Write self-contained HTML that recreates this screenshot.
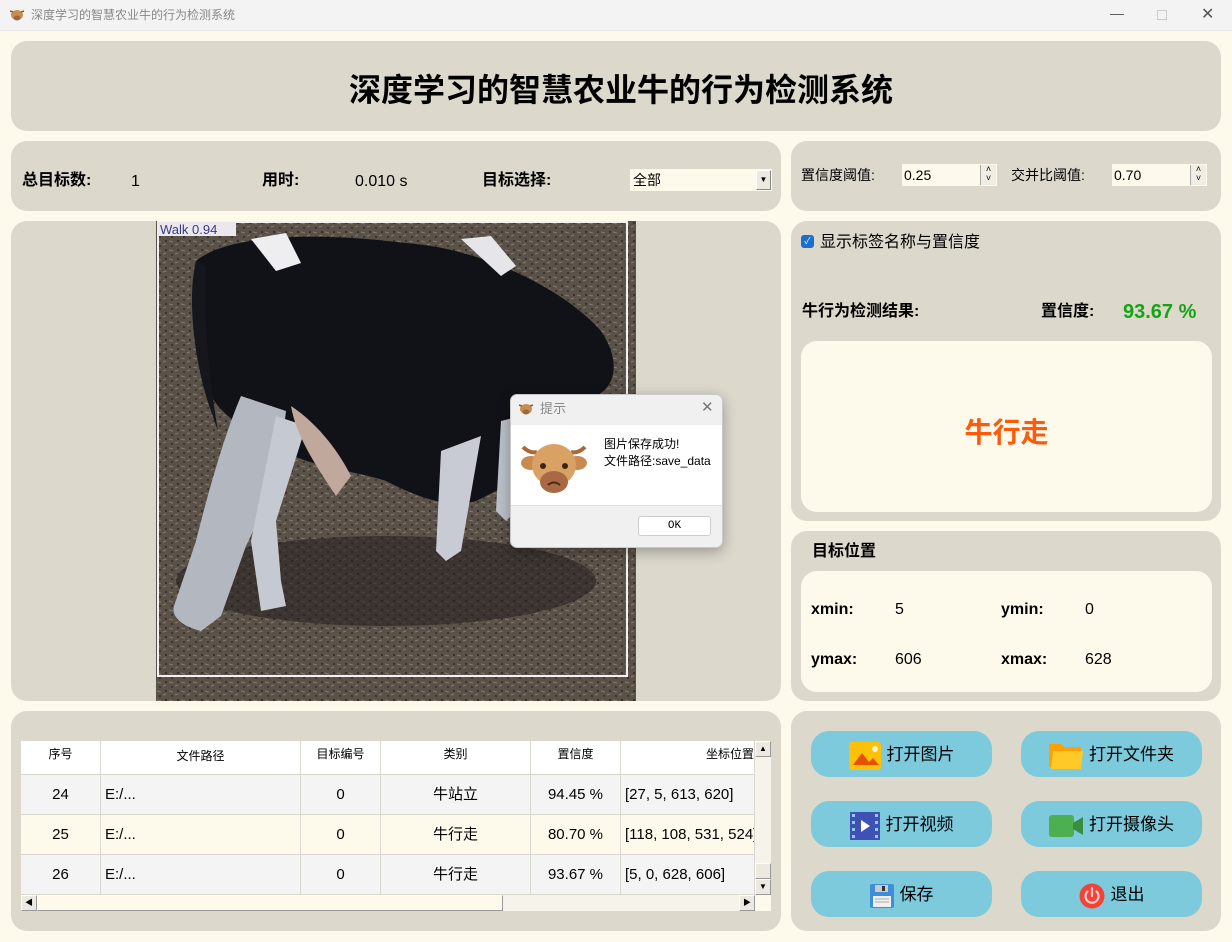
<!DOCTYPE html>
<html><head><meta charset="utf-8"><style>
*{margin:0;padding:0;box-sizing:border-box}
body{width:1232px;height:942px;background:#fefaeb;font-family:"Liberation Sans","Noto Sans CJK SC",sans-serif;position:relative;overflow:hidden;color:#000;line-height:1.2}
.a{position:absolute}
.p{position:absolute;background:#dcd8cc;border-radius:16px}
.b{font-weight:bold}
.btn{position:absolute;width:181px;height:46px;padding-top:3px;background:#7ccadc;border-radius:18px;font-size:17px;display:flex;align-items:center;justify-content:center;gap:6px}
.c{position:absolute;height:40px;line-height:40px;font-size:15px;text-align:center;border-right:1px solid #d8d8d0;border-bottom:1px solid #d8d8d0;white-space:nowrap;overflow:hidden}
.h{position:absolute;top:0;height:32px;line-height:26px;font-size:12px;text-align:center;border-right:1px solid #d8d8d0;background:#fff}
.l{text-align:left;padding-left:4px}
.sb{position:absolute;width:16px;height:16px;background:#ece9e0;border:1px solid #999;border-top-color:#fff;border-left-color:#fff;font-size:8px;text-align:center;line-height:14px}
</style></head><body>
<div class="a" style="left:0;top:0;width:1232px;height:31px;background:#f3f3f3;border-bottom:1px solid #e6e6e6"></div>
<svg class="a" style="left:9px;top:8px" width="16" height="14" viewBox="0 0 16 14"><ellipse cx="8" cy="7" rx="6" ry="5" fill="#c98d52"/><ellipse cx="8" cy="10" rx="3.5" ry="2.5" fill="#9b6840"/><path d="M1 3l3 1M15 3l-3 1" stroke="#8a5a30" stroke-width="1.5"/></svg>
<div class="a" style="left:31px;top:8px;font-size:12px;color:#888">深度学习的智慧农业牛的行为检测系统</div>
<div class="a" style="left:1110px;top:5px;font-size:14px;color:#555">—</div>
<div class="a" style="left:1157px;top:10px;width:10px;height:10px;border:1px solid #ccc"></div>
<div class="a" style="left:1201px;top:5px;font-size:16px;color:#555">✕</div>

<div class="p" style="left:11px;top:41px;width:1210px;height:90px"></div>
<div class="a b" style="left:0;width:1242px;top:71px;text-align:center;font-size:32px">深度学习的智慧农业牛的行为检测系统</div>

<div class="p" style="left:11px;top:141px;width:770px;height:70px"></div>
<div class="a b" style="left:22px;top:171px;font-size:16px">总目标数:</div>
<div class="a" style="left:131px;top:172px;font-size:16px">1</div>
<div class="a b" style="left:262px;top:171px;font-size:16px">用时:</div>
<div class="a" style="left:355px;top:172px;font-size:16px">0.010 s</div>
<div class="a b" style="left:482px;top:171px;font-size:16px">目标选择:</div>
<div class="a" style="left:630px;top:169px;width:142px;height:22px;background:#fefaeb;font-size:14px;padding:3px 3px">全部</div>
<div class="a" style="left:756px;top:170px;width:15px;height:20px;background:#ece9e0;border:1px solid #888;border-top-color:#fff;border-left-color:#fff;font-size:8px;text-align:center;line-height:18px">▼</div>

<div class="p" style="left:791px;top:141px;width:430px;height:70px"></div>
<div class="a" style="left:801px;top:167px;font-size:14px">置信度阈值:</div>
<div class="a" style="left:902px;top:164px;width:95px;height:22px;background:#fefaeb;font-size:14px;padding:3px 2px">0.25</div>
<div class="a" style="left:980px;top:165px;width:16px;height:20px;border-left:1px solid #aaa;font-size:9px;text-align:center;line-height:9px;background:#f0ede4">˄<br>˅</div>
<div class="a" style="left:1011px;top:167px;font-size:14px">交并比阈值:</div>
<div class="a" style="left:1112px;top:164px;width:95px;height:22px;background:#fefaeb;font-size:14px;padding:3px 2px">0.70</div>
<div class="a" style="left:1190px;top:165px;width:16px;height:20px;border-left:1px solid #aaa;font-size:9px;text-align:center;line-height:9px;background:#f0ede4">˄<br>˅</div>

<div class="p" style="left:11px;top:221px;width:770px;height:480px"></div>
<svg class="a" style="left:156px;top:221px" width="480" height="480" viewBox="0 0 480 480">
<defs><pattern id="g" width="12" height="9" patternUnits="userSpaceOnUse"><rect width="12" height="9" fill="#5a5149"/><path d="M1 2l4 1M7 6l3-1" stroke="#857b6c" stroke-width="1"/><rect x="9" y="1" width="2" height="2" fill="#3a332d"/><rect x="3" y="6" width="2" height="2" fill="#3d362e"/></pattern></defs>
<rect width="480" height="480" fill="url(#g)"/>
<ellipse cx="230" cy="360" rx="210" ry="45" fill="#26221f" opacity=".6"/>
<path d="M40 40 C70 15 150 10 250 22 C330 28 410 70 445 110 C465 140 460 165 440 175 C420 180 405 190 395 200 L370 250 L340 270 L320 280 C290 290 250 270 230 260 C200 250 150 245 130 230 C100 215 70 200 55 175 C45 130 38 80 40 40Z" fill="#111218"/>
<path d="M40 40 C30 80 40 150 55 190 L62 210 C50 140 48 80 50 45Z" fill="#16171c"/>
<path d="M85 175 L130 190 C125 235 110 285 90 325 L65 395 L45 410 C25 405 15 395 18 385 L40 320 C55 260 70 210 85 175Z" fill="#b3b7c0"/>
<path d="M120 195 L150 205 L120 300 L125 360 L130 385 L105 390 L95 320Z" fill="#c5c9d1"/>
<path d="M285 230 L325 215 L305 330 L290 340 L280 330 Z" fill="#c8cbd3"/>
<path d="M345 200 L365 195 L360 290 L350 300 L340 290 Z" fill="#bcc0c8"/>
<path d="M135 185 C165 205 185 235 195 255 L180 275 C160 245 140 215 135 185Z" fill="#c0a89c"/>
<path d="M95 18 L130 12 L145 42 L120 50Z" fill="#eeeef0"/>
<path d="M305 18 L335 15 L360 45 L345 55Z" fill="#e6e6ea"/>
<rect x="2" y="1" width="469" height="454" fill="none" stroke="#f2f2f2" stroke-width="2"/>
<rect x="2" y="1" width="78" height="14" fill="#eae8ee"/>
<text x="4" y="13" font-family="Liberation Sans" font-size="13" fill="#3a3a80">Walk  0.94</text>
</svg>

<div class="p" style="left:791px;top:221px;width:430px;height:300px"></div>
<div class="a" style="left:801px;top:235px;width:13px;height:13px;background:#1a6fc9;border-radius:3px;color:#fff;font-size:9px;text-align:center;line-height:13px">✓</div>
<div class="a" style="left:820px;top:233px;font-size:16px">显示标签名称与置信度</div>
<div class="a b" style="left:802px;top:302px;font-size:16px">牛行为检测结果:</div>
<div class="a b" style="left:1041px;top:302px;font-size:16px">置信度:</div>
<div class="a b" style="left:1123px;top:300px;font-size:20px;color:#14a514">93.67 %</div>
<div class="a" style="left:801px;top:341px;width:411px;height:171px;background:#fefaeb;border-radius:16px"></div>
<div class="a b" style="left:801px;width:411px;top:416px;text-align:center;font-size:28px;color:#ff5a0a">牛行走</div>

<div class="p" style="left:791px;top:531px;width:430px;height:170px"></div>
<div class="a b" style="left:812px;top:542px;font-size:16px">目标位置</div>
<div class="a" style="left:801px;top:571px;width:411px;height:121px;background:#fefaeb;border-radius:16px"></div>
<div class="a b" style="left:811px;top:600px;font-size:16px">xmin:</div>
<div class="a" style="left:895px;top:600px;font-size:16px">5</div>
<div class="a b" style="left:1001px;top:600px;font-size:16px">ymin:</div>
<div class="a" style="left:1085px;top:600px;font-size:16px">0</div>
<div class="a b" style="left:811px;top:650px;font-size:16px">ymax:</div>
<div class="a" style="left:895px;top:650px;font-size:16px">606</div>
<div class="a b" style="left:1001px;top:650px;font-size:16px">xmax:</div>
<div class="a" style="left:1085px;top:650px;font-size:16px">628</div>

<div class="p" style="left:11px;top:711px;width:770px;height:220px"></div>
<div class="a" style="left:21px;top:741px;width:750px;height:170px;background:#fefaeb;overflow:hidden">
<div class="h" style="left:0;width:80px">序号</div>
<div class="h" style="left:80px;width:200px;line-height:30px">文件路径</div>
<div class="h" style="left:280px;width:80px">目标编号</div>
<div class="h" style="left:360px;width:150px">类别</div>
<div class="h" style="left:510px;width:90px">置信度</div>
<div class="h" style="left:600px;width:134px;text-align:right">坐标位置</div>
<div class="a" style="left:0;top:33px;width:734px;height:1px;background:#d8d8d0"></div>
<div class="a" style="left:79px;top:32px;width:1px;height:2px;background:#d8d8d0"></div>
<div class="a" style="left:279px;top:32px;width:1px;height:2px;background:#d8d8d0"></div>
<div class="a" style="left:359px;top:32px;width:1px;height:2px;background:#d8d8d0"></div>
<div class="a" style="left:509px;top:32px;width:1px;height:2px;background:#d8d8d0"></div>
<div class="a" style="left:599px;top:32px;width:1px;height:2px;background:#d8d8d0"></div>

<div class="c" style="left:0;top:34px;width:80px;background:#f4f4f4">24</div>
<div class="c l" style="left:80px;top:34px;width:200px;background:#f4f4f4">E:/...</div>
<div class="c" style="left:280px;top:34px;width:80px;background:#f4f4f4">0</div>
<div class="c" style="left:360px;top:34px;width:150px;background:#f4f4f4">牛站立</div>
<div class="c" style="left:510px;top:34px;width:90px;background:#f4f4f4">94.45 %</div>
<div class="c l" style="left:600px;top:34px;width:134px;background:#f4f4f4">[27, 5, 613, 620]</div>

<div class="c" style="left:0;top:74px;width:80px">25</div>
<div class="c l" style="left:80px;top:74px;width:200px">E:/...</div>
<div class="c" style="left:280px;top:74px;width:80px">0</div>
<div class="c" style="left:360px;top:74px;width:150px">牛行走</div>
<div class="c" style="left:510px;top:74px;width:90px">80.70 %</div>
<div class="c l" style="left:600px;top:74px;width:134px">[118, 108, 531, 524]</div>

<div class="c" style="left:0;top:114px;width:80px;background:#f4f4f4">26</div>
<div class="c l" style="left:80px;top:114px;width:200px;background:#f4f4f4">E:/...</div>
<div class="c" style="left:280px;top:114px;width:80px;background:#f4f4f4">0</div>
<div class="c" style="left:360px;top:114px;width:150px;background:#f4f4f4">牛行走</div>
<div class="c" style="left:510px;top:114px;width:90px;background:#f4f4f4">93.67 %</div>
<div class="c l" style="left:600px;top:114px;width:134px;background:#f4f4f4">[5, 0, 628, 606]</div>

<div class="a" style="left:734px;top:0;width:16px;height:154px;background:#f5f3ea"></div>
<div class="sb" style="left:734px;top:0">▲</div>
<div class="sb" style="left:734px;top:122px"></div>
<div class="sb" style="left:734px;top:138px">▼</div>
<div class="a" style="left:0;top:154px;width:734px;height:16px;background:#f5f3ea"></div>
<div class="sb" style="left:0;top:154px">◀</div>
<div class="a" style="left:16px;top:154px;width:466px;height:16px;background:#fefaeb;border:1px solid #999;border-top-color:#fff;border-left-color:#fff"></div>
<div class="sb" style="left:718px;top:154px">▶</div>
</div>

<div class="p" style="left:791px;top:711px;width:430px;height:220px"></div>
<div class="btn" style="left:811px;top:731px"><svg width="32" height="28"><rect width="32" height="28" rx="3" fill="#ffc107"/><path d="M4 23 L13 11 L20 20 L24 16 L30 23Z" fill="#e65100"/><circle cx="26" cy="7" r="3" fill="#fff3c0"/></svg>打开图片</div>
<div class="btn" style="left:1021px;top:731px"><svg width="34" height="28"><path d="M0 2h12l3 3h17v20H0Z" fill="#ffa000"/><path d="M4 9h30l-2 18H2Z" fill="#ffca28"/></svg>打开文件夹</div>
<div class="btn" style="left:811px;top:801px"><svg width="30" height="28"><rect width="30" height="28" fill="#3f51b5"/><g fill="#90caf9"><rect x="2" y="2" width="3" height="3"/><rect x="2" y="9" width="3" height="3"/><rect x="2" y="16" width="3" height="3"/><rect x="2" y="23" width="3" height="3"/><rect x="25" y="2" width="3" height="3"/><rect x="25" y="9" width="3" height="3"/><rect x="25" y="16" width="3" height="3"/><rect x="25" y="23" width="3" height="3"/></g><path d="M11 8v12l9-6Z" fill="#fff"/></svg>打开视频</div>
<div class="btn" style="left:1021px;top:801px"><svg width="34" height="22"><rect width="25" height="22" rx="3" fill="#4caf50"/><path d="M24 8l10-6v18l-10-6Z" fill="#388e3c"/></svg>打开摄像头</div>
<div class="btn" style="left:811px;top:871px"><svg width="24" height="24"><rect width="24" height="24" rx="2" fill="#3f8fd8"/><rect x="5" y="1" width="13" height="7" fill="#ccc"/><rect x="12" y="2" width="3" height="5" fill="#333"/><rect x="3" y="12" width="18" height="11" fill="#f0f0f0"/><path d="M5 15h14M5 18h14" stroke="#aaa"/></svg>保存</div>
<div class="btn" style="left:1021px;top:871px"><svg width="26" height="26"><circle cx="13" cy="13" r="12.5" fill="#f44336"/><path d="M8.5 8.5a6.5 6.5 0 1 0 9 0" stroke="#ffcdd2" stroke-width="2.2" fill="none" stroke-linecap="round"/><path d="M13 5v8" stroke="#ffcdd2" stroke-width="2.2" stroke-linecap="round"/></svg>退出</div>

<div class="a" style="left:510px;top:394px;width:213px;height:154px;background:#f0f0f0;border:1px solid #c8c8c8;border-radius:7px;box-shadow:0 4px 14px rgba(0,0,0,.3);overflow:hidden">
<svg class="a" style="left:7px;top:7px" width="16" height="14" viewBox="0 0 16 14"><ellipse cx="8" cy="7" rx="6" ry="5" fill="#c98d52"/><ellipse cx="8" cy="10" rx="3.5" ry="2.5" fill="#9b6840"/><path d="M1 3l3 1M15 3l-3 1" stroke="#8a5a30" stroke-width="1.5"/></svg>
<div class="a" style="left:29px;top:6px;font-size:13px;color:#888">提示</div>
<div class="a" style="left:190px;top:4px;font-size:15px;color:#777">✕</div>
<div class="a" style="left:0;top:30px;width:213px;height:81px;background:#fff;border-bottom:1px solid #ddd"></div>
<svg class="a" style="left:10px;top:46px" width="66" height="54" viewBox="0 0 66 54"><path d="M2 6c5 5 10 6 14 5M64 6c-5 5-10 6-14 5" stroke="#a86a3a" stroke-width="4" fill="none"/><ellipse cx="10" cy="22" rx="10" ry="7" fill="#c88a50"/><ellipse cx="56" cy="22" rx="10" ry="7" fill="#c88a50"/><ellipse cx="33" cy="24" rx="22" ry="21" fill="#d9a164"/><circle cx="22" cy="25" r="3" fill="#3a2418"/><circle cx="44" cy="25" r="3" fill="#3a2418"/><ellipse cx="33" cy="41" rx="14" ry="11" fill="#a86a45"/><path d="M27 44q6-5 12 0" stroke="#4a2a18" stroke-width="2" fill="none"/></svg>
<div class="a" style="left:93px;top:41px;font-size:12px;line-height:17px">图片保存成功!<br>文件路径:save_data</div>
<div class="a" style="left:127px;top:121px;width:73px;height:20px;background:#fff;border:1px solid #ccc;border-radius:3px;font-size:11px;text-align:center;line-height:18px;font-family:'Liberation Mono',monospace">OK</div>
</div>
</body></html>
